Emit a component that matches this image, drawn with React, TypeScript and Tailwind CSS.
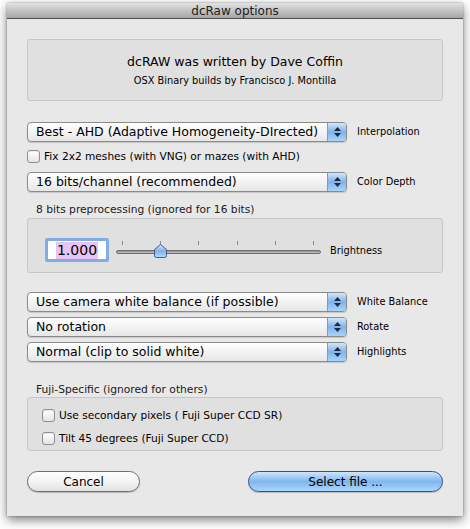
import React from "react";

const font = "font-['Lucida_Grande','DejaVu_Sans',sans-serif]";

function Popup({ value, label }: { value: string; label: string }) {
  return (
    <div className="flex items-center">
      <div className="flex h-[20px] w-[320px] overflow-hidden rounded-[4px] border border-[#8a8a8a] bg-gradient-to-b from-[#ffffff] via-[#f3f3f3] to-[#e6e6e6] shadow-[0_1px_1px_rgba(0,0,0,0.15)]">
        <div className="flex-1 whitespace-nowrap pl-[8px] text-[12.5px] leading-[18px] text-black">{value}</div>
        <div className="flex w-[19px] flex-col items-center justify-center gap-[2px] border-l border-[#7d9cc4] bg-gradient-to-b from-[#d2e6fb] via-[#7fb3ea] to-[#a9d3fa]">
          <svg width="7" height="4" viewBox="0 0 7 4">
            <path d="M3.5 0 L7 4 L0 4 Z" fill="#1b2a3d" />
          </svg>
          <svg width="7" height="4" viewBox="0 0 7 4">
            <path d="M0 0 L7 0 L3.5 4 Z" fill="#1b2a3d" />
          </svg>
        </div>
      </div>
      <span className="ml-[10px] text-[9.8px] text-black">{label}</span>
    </div>
  );
}

function Check({ label }: { label: string }) {
  return (
    <div className="flex h-[14px] items-center">
      <span className="h-[13px] w-[13px] rounded-[3px] border border-[#8f8f8f] bg-gradient-to-b from-[#ffffff] to-[#e4e4e4] shadow-[inset_0_1px_1px_rgba(0,0,0,0.08)]" />
      <span className="ml-[4px] text-[10.6px] leading-[14px] text-black">{label}</span>
    </div>
  );
}

function Slider() {
  const ticks = [6, 44, 82, 121, 159, 197];
  return (
    <div className="relative h-[26px] w-[205px]">
      {ticks.map((t) => (
        <span key={t} className="absolute top-[5px] h-[4px] w-px bg-[#8a8a8a]" style={{ left: t }} />
      ))}
      <div className="absolute left-0 top-[14px] h-[4px] w-[205px] rounded-full border border-[#707070] bg-gradient-to-b from-[#8a8a8a] to-[#c8c8c8]" />
      <svg className="absolute left-[38px] top-[8px]" width="13" height="14" viewBox="0 0 13 14">
        <defs>
          <linearGradient id="kn" x1="0" y1="0" x2="0" y2="1">
            <stop offset="0" stopColor="#d6e9fc" />
            <stop offset="0.5" stopColor="#7fb3ea" />
            <stop offset="1" stopColor="#b6dafb" />
          </linearGradient>
        </defs>
        <path d="M6.5 0.5 L12.5 5.5 L12.5 11.5 Q12.5 13.5 10.5 13.5 L2.5 13.5 Q0.5 13.5 0.5 11.5 L0.5 5.5 Z" fill="url(#kn)" stroke="#3d5d8e" />
      </svg>
    </div>
  );
}

export default function App() {
  return (
    <div className={`${font} h-[529px] w-[470px] bg-white pt-[3px] pl-[7px]`}>
      <div className="flex h-[513px] w-[456px] flex-col bg-[#e8e8e8] shadow-[0_4px_10px_rgba(0,0,0,0.5),0_0_2px_rgba(0,0,0,0.35)]">
        <div className="flex h-[16px] items-center justify-center border-b border-[#505050] bg-gradient-to-b from-[#e2e2e2] to-[#a6a6a6] text-[12px] leading-none text-[#202020]">
          dcRaw options
        </div>

        <div className="flex flex-col pl-[20px]">
          <div className="mt-[20px] flex h-[62px] w-[416px] flex-col items-center justify-center rounded-[3px] border border-[#c6c6c6] bg-[#e0e0e0]">
            <div className="text-[12.5px] leading-[18px] text-black">dcRAW was written by Dave Coffin</div>
            <div className="mt-[3px] text-[9.8px] leading-[13px] text-black">OSX Binary builds by Francisco J. Montilla</div>
          </div>

          <div className="mt-[21px]">
            <Popup value="Best - AHD (Adaptive Homogeneity-DIrected)" label="Interpolation" />
          </div>
          <div className="mt-[7px]">
            <Check label="Fix 2x2 meshes (with VNG) or mazes (with AHD)" />
          </div>
          <div className="mt-[9px]">
            <Popup value="16 bits/channel (recommended)" label="Color Depth" />
          </div>

          <div className="ml-[9px] mt-[11px] text-[10.7px] leading-[14px] text-[#202020]">8 bits preprocessing (ignored for 16 bits)</div>
          <div className="mt-[1px] flex h-[55px] w-[416px] items-start rounded-[3px] border border-[#c6c6c6] bg-[#e0e0e0] pl-[17px] pt-[17px]">
            <div className="mt-[2px] flex h-[24px] w-[64px] items-center justify-center rounded-[2px] border-[3px] border-[#80aee4] bg-white">
              <span className="bg-[#e8c4f4] px-[1px] text-[14px] leading-[17px] text-black">1.000</span>
            </div>
            <div className="ml-[7px]">
              <Slider />
            </div>
            <span className="ml-[9px] mt-[9px] text-[9.8px] leading-[12px] text-black">Brightness</span>
          </div>

          <div className="mt-[19px] flex flex-col gap-[5px]">
            <Popup value="Use camera white balance (if possible)" label="White Balance" />
            <Popup value="No rotation" label="Rotate" />
            <Popup value="Normal (clip to solid white)" label="Highlights" />
          </div>

          <div className="ml-[9px] mt-[21px] text-[10.7px] leading-[14px] text-[#202020]">Fuji-Specific (ignored for others)</div>
          <div className="flex h-[54px] w-[416px] flex-col gap-[9px] rounded-[3px] border border-[#c6c6c6] bg-[#e0e0e0] pl-[14px] pt-[10px]">
            <Check label="Use secondary pixels ( Fuji Super CCD SR)" />
            <Check label="Tilt 45 degrees (Fuji Super CCD)" />
          </div>

          <div className="mt-[20px] flex w-[416px] justify-between">
            <button className="h-[21px] w-[113px] rounded-full border border-[#6f6f6f] bg-gradient-to-b from-[#ffffff] via-[#f4f4f4] to-[#e2e2e2] text-[12px] leading-none text-black shadow-[0_1px_1px_rgba(0,0,0,0.2)]">
              Cancel
            </button>
            <button className="h-[21px] w-[195px] rounded-full border border-[#32508a] bg-gradient-to-b from-[#cfe5fb] via-[#80b6ee] to-[#a8d6fd] text-[12px] leading-none text-black shadow-[0_1px_1px_rgba(0,0,0,0.2)]">
              Select file ...
            </button>
          </div>
        </div>
      </div>
    </div>
  );
}
